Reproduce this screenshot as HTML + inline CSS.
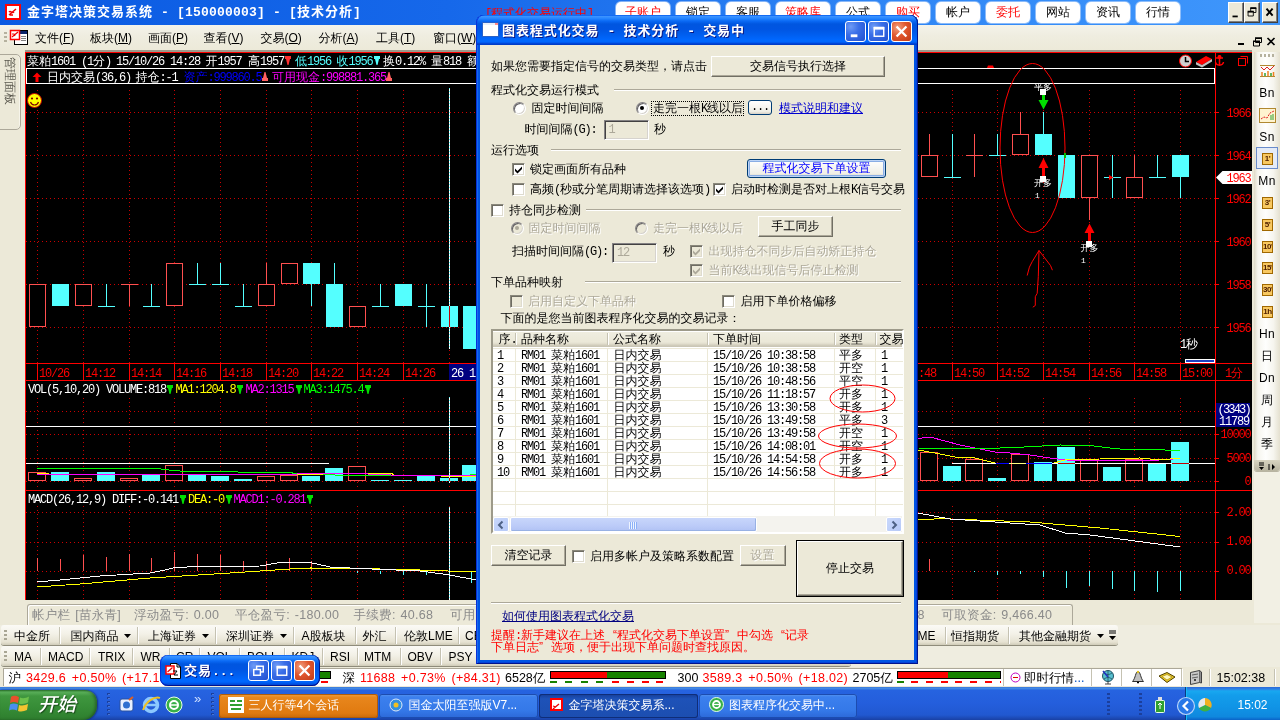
<!DOCTYPE html>
<html lang="zh-CN"><head><meta charset="utf-8"><title>金字塔决策交易系统</title>
<style>
html,body{margin:0;padding:0}
body{width:1280px;height:720px;overflow:hidden;position:relative;will-change:transform;background:#ece9d8;font-family:"Liberation Sans","WenQuanYi Zen Hei",sans-serif;font-size:12px;color:#000}
div,span{box-sizing:border-box}
.t{position:absolute;white-space:nowrap;font-size:12px}
.lb{font-family:"Liberation Mono","Noto Sans CJK SC",monospace;font-size:13px;letter-spacing:0.2px;font-weight:bold}
.l{font-family:"Liberation Mono","WenQuanYi Zen Hei",monospace;font-size:12px;letter-spacing:-1.2px}
.a{position:absolute}
.ql{display:inline-block;width:12px;text-align:right}
.qr{display:inline-block;width:12px;text-align:left}
.s{font-family:"Liberation Sans","WenQuanYi Zen Hei",sans-serif}
.s .l{font-family:"Liberation Sans","WenQuanYi Zen Hei",sans-serif;font-size:12px;letter-spacing:0}
.gray{color:#aca899;text-shadow:1px 1px 0 #fff}
.btn{position:absolute;background:#ece9d8;border:1px solid;border-color:#fff #716f64 #716f64 #fff;box-shadow:inset -1px -1px 0 #aca899;text-align:center;white-space:nowrap}
.xpbtn{position:absolute;border:1px solid #003c74;border-radius:3px;background:linear-gradient(#fff,#f0efe6 80%,#d6d0c5);text-align:center;white-space:nowrap}
.cb{position:absolute;width:13px;height:13px;border:1px solid;border-color:#8a887c #fff #fff #8a887c;background:#fff;box-shadow:inset 1px 1px 0 #6e6c62,inset -1px -1px 0 #dedbcf}
.cb.dis{background:#ece9d8}
.rb{position:absolute;width:13px;height:13px;border:1px solid;border-color:#848284 #fff #fff #848284;border-radius:50%;background:#fff;box-shadow:inset 1px 1px 0 #636163,inset -1px -1px 0 #d6d3ce}
.rb.dis{background:#ece9d8}
.gl{position:absolute;height:2px;border-top:1px solid #aca899;border-bottom:1px solid #fff}
.edit{position:absolute;border:1px solid;border-color:#848284 #fff #fff #848284;background:#ece9d8;box-shadow:inset 1px 1px 0 #424142,inset -1px -1px 0 #d6d3ce}
</style></head><body>
<div class="" style="position:absolute;left:0px;top:0px;width:1280px;height:25px;background:linear-gradient(90deg,#0a5ae2 0%,#1668ea 35%,#2f86f5 70%,#3f97fc 100%);"></div>
<div class="" style="position:absolute;left:5px;top:4px;width:16px;height:16px;background:#fff;border:2px solid #f00;"><svg width="12" height="12" viewBox="0 0 12 12" style="display:block"><path d="M2 9 L9 3 M2 6 C4 4,5 8,7 6 M3 9 L6 9" stroke="#e00" stroke-width="1.5" fill="none"/></svg></div>
<div class="t" style="left:27px;top:4px;height:16px;line-height:16px;font-size:13px;font-weight:bold;color:#fff;letter-spacing:1px;font-family:'Liberation Sans','Noto Sans CJK SC',sans-serif">金字塔决策交易系统<span class="lb"> - [150000003] - [</span>技术分析<span class="lb">]</span></div>
<div class="t " style="left:485px;top:4.5px;height:16px;line-height:16px;color:#f00;font-size:12px"><span class="l">[</span>程式化交易运行中<span class="l">]</span></div>
<div class="" style="position:absolute;left:616px;top:2px;width:54px;height:21px;background:#fff;border-radius:5px;text-align:center;line-height:20px;font-size:12px;color:#f00;white-space:nowrap;box-shadow:0 0 0 1px rgba(200,220,250,.6)">子账户</div>
<div class="" style="position:absolute;left:676px;top:2px;width:44px;height:21px;background:#fff;border-radius:5px;text-align:center;line-height:20px;font-size:12px;color:#000;white-space:nowrap;box-shadow:0 0 0 1px rgba(200,220,250,.6)">锁定</div>
<div class="" style="position:absolute;left:726px;top:2px;width:44px;height:21px;background:#fff;border-radius:5px;text-align:center;line-height:20px;font-size:12px;color:#000;white-space:nowrap;box-shadow:0 0 0 1px rgba(200,220,250,.6)">客服</div>
<div class="" style="position:absolute;left:776px;top:2px;width:54px;height:21px;background:#fff;border-radius:5px;text-align:center;line-height:20px;font-size:12px;color:#f00;white-space:nowrap;box-shadow:0 0 0 1px rgba(200,220,250,.6)">策略库</div>
<div class="" style="position:absolute;left:836px;top:2px;width:44px;height:21px;background:#fff;border-radius:5px;text-align:center;line-height:20px;font-size:12px;color:#000;white-space:nowrap;box-shadow:0 0 0 1px rgba(200,220,250,.6)">公式</div>
<div class="" style="position:absolute;left:886px;top:2px;width:44px;height:21px;background:#fff;border-radius:5px;text-align:center;line-height:20px;font-size:12px;color:#f00;white-space:nowrap;box-shadow:0 0 0 1px rgba(200,220,250,.6)">购买</div>
<div class="" style="position:absolute;left:936px;top:2px;width:44px;height:21px;background:#fff;border-radius:5px;text-align:center;line-height:20px;font-size:12px;color:#000;white-space:nowrap;box-shadow:0 0 0 1px rgba(200,220,250,.6)">帐户</div>
<div class="" style="position:absolute;left:986px;top:2px;width:44px;height:21px;background:#fff;border-radius:5px;text-align:center;line-height:20px;font-size:12px;color:#f00;white-space:nowrap;box-shadow:0 0 0 1px rgba(200,220,250,.6)">委托</div>
<div class="" style="position:absolute;left:1036px;top:2px;width:44px;height:21px;background:#fff;border-radius:5px;text-align:center;line-height:20px;font-size:12px;color:#000;white-space:nowrap;box-shadow:0 0 0 1px rgba(200,220,250,.6)">网站</div>
<div class="" style="position:absolute;left:1086px;top:2px;width:44px;height:21px;background:#fff;border-radius:5px;text-align:center;line-height:20px;font-size:12px;color:#000;white-space:nowrap;box-shadow:0 0 0 1px rgba(200,220,250,.6)">资讯</div>
<div class="" style="position:absolute;left:1136px;top:2px;width:44px;height:21px;background:#fff;border-radius:5px;text-align:center;line-height:20px;font-size:12px;color:#000;white-space:nowrap;box-shadow:0 0 0 1px rgba(200,220,250,.6)">行情</div>
<div class="" style="position:absolute;left:1228px;top:2px;width:16px;height:21px;background:#ece9d8;border:1px solid;border-color:#fff #404040 #404040 #fff;box-shadow:inset -1px -1px 0 #808080"><svg width="14" height="19" viewBox="0 0 16 19" style="display:block"><rect x="4" y="13" width="6" height="2" fill="#000"/></svg></div>
<div class="" style="position:absolute;left:1244px;top:2px;width:16px;height:21px;background:#ece9d8;border:1px solid;border-color:#fff #404040 #404040 #fff;box-shadow:inset -1px -1px 0 #808080"><svg width="14" height="19" viewBox="0 0 16 19" style="display:block"><path d="M6.500 4.500h6v5h-6z" fill="#ece9d8" stroke="#000"/><path d="M6 4.500h7" stroke="#000" stroke-width="2"/><path d="M3.500 8.500h6v5h-6z" fill="#ece9d8" stroke="#000"/><path d="M3 8.500h7" stroke="#000" stroke-width="2"/></svg></div>
<div class="" style="position:absolute;left:1262px;top:2px;width:16px;height:21px;background:#ece9d8;border:1px solid;border-color:#fff #404040 #404040 #fff;box-shadow:inset -1px -1px 0 #808080"><svg width="14" height="19" viewBox="0 0 16 19" style="display:block"><path d="M4 5 L11 13 M11 5 L4 13" stroke="#000" stroke-width="2.2"/></svg></div>
<div class="" style="position:absolute;left:0px;top:25px;width:1280px;height:27px;background:linear-gradient(180deg,#f4f3ea 0,#efede0 40%,#ece9d8 100%);"></div>
<div class="" style="position:absolute;left:4px;top:32px;width:3px;height:11px;background:repeating-linear-gradient(180deg,#b5b19e 0 2px,transparent 2px 4px);"></div>
<svg class="a" style="left:9px;top:28px" width="20" height="18" viewBox="0 0 20 18"><rect x="5.500" y="2.500" width="13" height="14" fill="#fff" stroke="#000"/><rect x="6" y="3" width="12" height="3" fill="#0a246a"/><path d="M12 8.500h5M12 10.500h5M12 12.500h5" stroke="#808080"/><rect x="1.500" y="2.500" width="9" height="9" fill="#fff" stroke="#f00" stroke-width="1.500"/><path d="M3 9 L9 4 M3 6 L5 6 L6 8" stroke="#e00" stroke-width="1.2" fill="none"/></svg>
<div class="t" style="left:35px;top:30px;height:16px;line-height:16px;font-size:12px">文件<span style="font-size:12px">(<u>F</u>)</span></div>
<div class="t" style="left:90px;top:30px;height:16px;line-height:16px;font-size:12px">板块<span style="font-size:12px">(<u>M</u>)</span></div>
<div class="t" style="left:148px;top:30px;height:16px;line-height:16px;font-size:12px">画面<span style="font-size:12px">(<u>P</u>)</span></div>
<div class="t" style="left:203.5px;top:30px;height:16px;line-height:16px;font-size:12px">查看<span style="font-size:12px">(<u>V</u>)</span></div>
<div class="t" style="left:260.5px;top:30px;height:16px;line-height:16px;font-size:12px">交易<span style="font-size:12px">(<u>O</u>)</span></div>
<div class="t" style="left:318.5px;top:30px;height:16px;line-height:16px;font-size:12px">分析<span style="font-size:12px">(<u>A</u>)</span></div>
<div class="t" style="left:376px;top:30px;height:16px;line-height:16px;font-size:12px">工具<span style="font-size:12px">(<u>T</u>)</span></div>
<div class="t" style="left:433px;top:30px;height:16px;line-height:16px;font-size:12px">窗口<span style="font-size:12px">(<u>W</u>)</span></div>
<svg class="a" style="left:1236px;top:35px" width="42" height="14" viewBox="0 0 42 14"><rect x="2" y="8" width="6" height="2" fill="#000"/><path d="M19.500 3.500h6v4h-6z M17.500 6.500h6v4.500h-6z" fill="#ece9d8" stroke="#000"/><path d="M19 3h7M17 6.200h7" stroke="#000" stroke-width="1.600"/><path d="M31.500 3 L38.500 10 M38.500 3 L31.500 10" stroke="#000" stroke-width="1.600"/></svg>
<div class="" style="position:absolute;left:0px;top:53px;width:25px;height:549px;background:#ece9d8;"></div>
<div class="" style="position:absolute;left:-2px;top:54px;width:23px;height:76px;border:1px solid #aca899;border-radius:0 5px 5px 0;background:#ece9d8;box-shadow:inset -1px 0 0 #f6f4ea"></div>
<div class="t" style="left:10px;top:80.500px;width:0;height:0;"><div style="position:absolute;left:-34px;top:-8px;width:68px;height:16px;line-height:16px;font-size:12px;color:#5a584e;transform:rotate(90deg);text-align:center">管理面板</div></div><svg class="a" style="left:0;top:0" width="1280" height="720" viewBox="0 0 1280 720">
<rect x="25" y="51" width="1227" height="549" fill="#000"/>
<rect x="25" y="50" width="1227" height="2" fill="#9d9a8c"/>
<path d="M37.5 90V363 M37.5 398V490 M37.5 506V600 M83.5 90V363 M83.5 398V490 M83.5 506V600 M129.5 90V363 M129.5 398V490 M129.5 506V600 M174.5 90V363 M174.5 398V490 M174.5 506V600 M220.5 90V363 M220.5 398V490 M220.5 506V600 M266.5 90V363 M266.5 398V490 M266.5 506V600 M311.5 90V363 M311.5 398V490 M311.5 506V600 M357.5 90V363 M357.5 398V490 M357.5 506V600 M403.5 90V363 M403.5 398V490 M403.5 506V600 M449.5 90V363 M449.5 398V490 M449.5 506V600 M494.5 90V363 M494.5 398V490 M494.5 506V600 M540.5 90V363 M540.5 398V490 M540.5 506V600 M586.5 90V363 M586.5 398V490 M586.5 506V600 M631.5 90V363 M631.5 398V490 M631.5 506V600 M677.5 90V363 M677.5 398V490 M677.5 506V600 M723.5 90V363 M723.5 398V490 M723.5 506V600 M769.5 90V363 M769.5 398V490 M769.5 506V600 M814.5 90V363 M814.5 398V490 M814.5 506V600 M860.5 90V363 M860.5 398V490 M860.5 506V600 M906.5 90V363 M906.5 398V490 M906.5 506V600 M952.5 90V363 M952.5 398V490 M952.5 506V600 M997.5 90V363 M997.5 398V490 M997.5 506V600 M1043.5 90V363 M1043.5 398V490 M1043.5 506V600 M1089.5 90V363 M1089.5 398V490 M1089.5 506V600 M1134.5 90V363 M1134.5 398V490 M1134.5 506V600 M1180.5 90V363 M1180.5 398V490 M1180.5 506V600 M26 112.5 H1215 M26 155.5 H1215 M26 198.5 H1215 M26 241.5 H1215 M26 284.5 H1215 M26 327.5 H1215 M26 411.5 H1215 M26 434.5 H1215 M26 458.5 H1215 M26 481.5 H1215 M26 512.5 H1215 M26 542.5 H1215 M26 571.5 H1215" stroke="#cc0000" stroke-width="1" stroke-dasharray="1 3" fill="none" shape-rendering="crispEdges"/>
<path d="M25 52.5H1252 M25.5 52V600 M25 363.500H1252 M25 380.500H1252 M25 490.500H1252 M1215.500 52V600 M37.5 363V381 M83.5 363V381 M129.5 363V381 M174.5 363V381 M220.5 363V381 M266.5 363V381 M311.5 363V381 M357.5 363V381 M403.5 363V381 M449.5 363V381 M494.5 363V381 M540.5 363V381 M586.5 363V381 M631.5 363V381 M677.5 363V381 M723.5 363V381 M769.5 363V381 M814.5 363V381 M860.5 363V381 M906.5 363V381 M952.5 363V381 M997.5 363V381 M1043.5 363V381 M1089.5 363V381 M1134.5 363V381 M1180.5 363V381 M1215 112.5 H1219 M1215 155.5 H1219 M1215 198.5 H1219 M1215 241.5 H1219 M1215 284.5 H1219 M1215 327.5 H1219 M1215 434.5 H1219 M1215 458.5 H1219 M1215 481.5 H1219 M1215 512.5 H1219 M1215 542.5 H1219 M1215 571.5 H1219" stroke="#f00" stroke-width="1" fill="none" shape-rendering="crispEdges"/>
<rect x="26.500" y="68.500" width="1188" height="15" fill="none" stroke="#fff" shape-rendering="crispEdges"/>
<path d="M52 284H69V306H52Z M303 263H320V284H303Z M326 284H343V327H326Z M395 284H412V306H395Z M441 306H458V327H441Z M463 306H480V349H463Z M1035 134H1052V155H1035Z M1058 155H1075V198H1058Z M1172 155H1189V177H1172Z" fill="#54ffff" shape-rendering="crispEdges"/>
<path d="M121 284.5H138 M129.5 284V306 M266.5 263V284 M929.5 134V155 M966 155.5H983 M974.5 134V177 M1020.5 112V134 M1089.5 198V220 M1134.5 155V177" stroke="#ff5050" fill="none" shape-rendering="crispEdges"/>
<path d="M29.5 284.5H45.5V326.5H29.5Z M75.5 284.5H91.5V305.5H75.5Z M166.5 263.5H182.5V305.5H166.5Z M258.5 284.5H274.5V305.5H258.5Z M281.5 263.5H297.5V283.5H281.5Z M349.5 306.5H365.5V326.5H349.5Z M921.5 155.5H937.5V176.5H921.5Z M1012.5 134.5H1028.5V154.5H1012.5Z M1081.5 155.5H1097.5V197.5H1081.5Z M1126.5 177.5H1142.5V197.5H1126.5Z" stroke="#ff5050" fill="#000" shape-rendering="crispEdges"/>
<path d="M98 306.5H115 M106.5 284V307 M143 306.5H160 M151.5 284V307 M189 284.5H206 M197.5 263V285 M212 284.5H229 M220.5 263V285 M235 306.5H252 M243.5 284V307 M311.5 284V306 M334.5 263V284 M372 306.5H389 M380.5 284V307 M418 306.5H435 M426.5 284V327 M944 177.5H961 M952.5 134V178 M989 155.5H1006 M997.5 134V156 M1043.5 112V134 M1104 177.5H1121 M1112.5 155V198 M1149 177.5H1166 M1157.5 155V178 M1180.5 177V198" stroke="#54ffff" fill="none" shape-rendering="crispEdges"/>
<path d="M51 472H69V481H51Z M97 472H115V481H97Z M142 475H160V481H142Z M188 475H206V481H188Z M211 476H229V481H211Z M234 479H252V481H234Z M302 476H320V481H302Z M325 468H343V481H325Z M371 480H389V481H371Z M394 480H412V481H394Z M417 476H435V481H417Z M440 478H458V481H440Z M462 465H480V481H462Z M943 466H961V481H943Z M988 478H1006V481H988Z M1034 462H1052V481H1034Z M1057 447H1075V481H1057Z M1103 467H1121V481H1103Z M1148 464H1166V481H1148Z M1171 442H1189V481H1171Z" fill="#54ffff" shape-rendering="crispEdges"/>
<path d="M28.5 472.5H45.5V480.5H28.5Z M74.5 478.5H91.5V480.5H74.5Z M120.5 478.5H137.5V480.5H120.5Z M165.5 465.5H182.5V480.5H165.5Z M257.5 476.5H274.5V480.5H257.5Z M280.5 475.5H297.5V480.5H280.5Z M348.5 466.5H365.5V480.5H348.5Z M920.5 452.5H937.5V480.5H920.5Z M965.5 459.5H982.5V480.5H965.5Z M1011.5 454.5H1028.5V480.5H1011.5Z M1080.5 460.5H1097.5V480.5H1080.5Z M1125.5 459.5H1142.5V480.5H1125.5Z" stroke="#ff5050" fill="#000" shape-rendering="crispEdges"/>
<polyline points="37,468.5 160,468.5 162,469.5 175,470.5 185,471.5 290,472.5 300,474.5 330,474.5 340,475.5 440,475.5 452,476.5 476,474.5" stroke="#00ff00" stroke-width="1" fill="none" shape-rendering="crispEdges"/>
<polyline points="37,473.5 60,474.5 150,474.5 300,474.5 347,473.5 392,473.5 394,475.5 438,475.5 445,476.5 476,476.5" stroke="#ffff00" stroke-width="1" fill="none" shape-rendering="crispEdges"/>
<polyline points="37,474.5 250,474.5 345,473.5 390,474.5 392,475.5 438,475.5 476,475.5" stroke="#ff00ff" stroke-width="1" fill="none" shape-rendering="crispEdges"/>
<polyline points="918,438.5 930,437 945,441 960,445 995,452 1010,453 1030,455 1050,458 1065,460 1130,460.5 1160,460 1180,458.5" stroke="#ff00ff" stroke-width="1" fill="none" shape-rendering="crispEdges"/>
<polyline points="918,448 945,448.5 960,448 1000,448 1015,447.5 1060,445 1090,445.5 1110,448 1130,450 1150,449 1165,450 1180,451" stroke="#00ff00" stroke-width="1" fill="none" shape-rendering="crispEdges"/>
<polyline points="918,450 935,453 955,457 975,458 995,463 1050,464 1065,460 1100,459 1140,458 1160,460 1180,458" stroke="#ffff00" stroke-width="1" fill="none" shape-rendering="crispEdges"/>
<path d="M26 426.500H1215 M26 463.500H329 M952 463.500H1215" stroke="#fff" fill="none" shape-rendering="crispEdges"/>
<path d="M996 463.500H1052" stroke="#0000ff" fill="none" shape-rendering="crispEdges"/>
<path d="M1009 463.500H1026" stroke="#ffff80" fill="none" shape-rendering="crispEdges"/>
<path d="M37.5 558V571 M60.5 559V571 M83.5 555V571 M106.5 557V571 M129.5 554V571 M151.5 558V571 M174.5 552V571 M197.5 554V571 M220.5 555V571 M243.5 561V571 M266.5 561V571 M289.5 558V571 M311.5 561V571 M929.5 559V571" stroke="#ff5050" fill="none" shape-rendering="crispEdges"/>
<path d="M357.5 571V573 M380.5 571V574 M403.5 571V575 M426.5 571V575 M449.5 571V576 M471.5 571V583 M974.5 571V572 M997.5 571V575 M1020.5 571V574 M1043.5 571V577 M1066.5 571V588 M1089.5 571V586 M1112.5 571V589 M1134.5 571V591 M1157.5 571V592 M1180.5 571V591" stroke="#54ffff" fill="none" shape-rendering="crispEdges"/>
<polyline points="37,587 80,584 150,578 230,573 290,569 310,568 360,568.5 420,570 476,572" stroke="#ffff00" stroke-width="1" fill="none" shape-rendering="crispEdges"/>
<polyline points="37,582 60,580 100,576 150,573 165,570 175,567.5 200,566.5 260,566 280,562.5 310,562.5 330,567 360,568.5 420,571 450,575 476,580" stroke="#ffffff" stroke-width="1" fill="none" shape-rendering="crispEdges"/>
<polyline points="918,520 940,518.6 1030,522 1100,528 1180,536.5" stroke="#ffff00" stroke-width="1" fill="none" shape-rendering="crispEdges"/>
<polyline points="918,513 950,519 1040,525 1065,533 1090,535 1180,547" stroke="#ffffff" stroke-width="1" fill="none" shape-rendering="crispEdges"/>
<path d="M1058 463.500H1075 M1172 463.500H1189" stroke="#c00000" fill="none" shape-rendering="crispEdges"/>
<path d="M449.500 88V349 M449.500 397V483 M449.500 507V600" stroke="#fff" fill="none" shape-rendering="crispEdges"/>
<path d="M449.500 88V349 M449.500 397V483 M449.500 507V600" stroke="#54ffff" stroke-dasharray="1 2" fill="none" shape-rendering="crispEdges"/>
<path d="M449.500 306V327 M449.500 478V481" stroke="#c00000" fill="none" shape-rendering="crispEdges"/>
<ellipse cx="1032.500" cy="148" rx="32.500" ry="84.500" stroke="#f00" fill="none"/>
<path d="M1039 250.500 L1038.300 276.700 L1037.200 293.300 L1035.300 296.700 L1035.300 305.500 L1032.800 307.200 M1039 250.500 L1032.200 261.700 L1029.400 267.200 L1027.200 275.500 M1039 250.500 L1050.500 265.500 L1052.400 270.200" stroke="#f00" fill="none"/>
<rect x="1040" y="89" width="6" height="6" fill="#fff"/>
<path d="M1042 95H1045V100H1048.500L1043.500 109.500L1038.500 100H1042Z" fill="#00e000"/>
<path d="M1043.500 158 L1048.500 168 H1045 V176 H1042 V168 H1038.500Z" fill="#f00"/>
<rect x="1040" y="176" width="6" height="6" fill="#fff"/>
<path d="M1089.500 223.500 L1094.500 233 H1091 V241 H1088 V233 H1084.500Z" fill="#f00"/>
<rect x="1086" y="241" width="6" height="6" fill="#fff"/>
<path d="M1109 175 L1113.500 177.500 L1109 180Z" fill="#f00"/>
<rect x="1064" y="153" width="2" height="5" fill="#00c000"/>
<rect x="1185.500" y="359.500" width="29" height="3" fill="#2040c0" stroke="#fff" shape-rendering="crispEdges"/>
<path d="M1216 177.500 L1222.500 171 H1252 V184 H1222.500Z" fill="#fff"/>
<rect x="1216" y="403" width="34" height="24" fill="#000080"/>
<rect x="449" y="364" width="27" height="16" fill="#000080"/>
<circle cx="34.500" cy="100.500" r="7" fill="#ffff00" stroke="#c80000" stroke-width="1"/><circle cx="32" cy="98.500" r="1.100" fill="#800000"/><circle cx="37" cy="98.500" r="1.100" fill="#800000"/><path d="M30.500 102 C32 106,37 106,38.500 102" stroke="#800000" fill="none" stroke-width="1.200"/>
<path d="M37 72.500 L41.500 77 H38.500 V82 H35.500 V77 H32.500Z" fill="#f00"/>
<circle cx="1185.500" cy="61" r="6" fill="#d0d0d0" stroke="#f00"/><path d="M1185.500 57V61.500H1189" stroke="#000" fill="none" stroke-width="1.500"/>
<path d="M1196 62 L1206 56 L1212 59 L1202 65Z" fill="#f00"/><path d="M1196 62V64.500L1202 67.500V65Z M1202 65 L1212 59V61.500L1202 67.500Z" fill="#c0c0c0"/>
<path d="M1219.500 55V66 M1216 58H1223 M1215.500 62 C1216 66,1223 66,1223.500 62" stroke="#f00" stroke-width="1.500" fill="none"/><circle cx="1219.500" cy="57" r="2" fill="#f00"/>
<path d="M1240.500 56.500H1247.500V63.500" stroke="#f00" fill="none"/><rect x="1238.500" y="58.500" width="7" height="7" fill="none" stroke="#f00"/>
<path d="M987 68 L994 68 L993 65.500 L988 65.500Z" fill="#f00"/>
</svg>
<div class="t " style="left:27px;top:53.5px;height:14px;line-height:14px;color:#fff">菜粕<span class="l">1601</span></div>
<div class="t " style="left:81px;top:53.5px;height:14px;line-height:14px;color:#fff"><span class="l">(1</span>分<span class="l">)</span></div>
<div class="t " style="left:116px;top:53.5px;height:14px;line-height:14px;color:#fff"><span class="l">15/10/26</span></div>
<div class="t " style="left:170px;top:53.5px;height:14px;line-height:14px;color:#fff"><span class="l">14:28</span></div>
<div class="t " style="left:205.5px;top:53.5px;height:14px;line-height:14px;color:#fff">开<span class="l">1957</span></div>
<div class="t " style="left:248px;top:53.5px;height:14px;line-height:14px;color:#fff">高<span class="l">1957</span></div>
<div class="t " style="left:295px;top:53.5px;height:14px;line-height:14px;color:#54ffff">低<span class="l">1956</span></div>
<div class="t " style="left:336.5px;top:53.5px;height:14px;line-height:14px;color:#54ffff">收<span class="l">1956</span></div>
<div class="t " style="left:383px;top:53.5px;height:14px;line-height:14px;color:#fff">换<span class="l">0.12%</span></div>
<div class="t " style="left:431px;top:53.5px;height:14px;line-height:14px;color:#fff">量<span class="l">818</span></div>
<div class="t " style="left:467px;top:53.5px;height:14px;line-height:14px;color:#fff">额</div>
<svg class="a" style="left:285px;top:56px" width="6" height="9" viewBox="0 0 6 9"><path d="M0 0H6V3H5L3.500 9H2.500L1 3H0Z" fill="#ff3030"/></svg>
<svg class="a" style="left:374px;top:56px" width="6" height="9" viewBox="0 0 6 9"><path d="M0 0H6V3H5L3.500 9H2.500L1 3H0Z" fill="#54ffff"/></svg>
<div class="t " style="left:47px;top:69.5px;height:14px;line-height:14px;color:#fff">日内交易<span class="l">(36,6)</span></div>
<div class="t " style="left:135.5px;top:69.5px;height:14px;line-height:14px;color:#fff">持仓<span class="l">:-1</span></div>
<div class="t " style="left:183.5px;top:69.5px;height:14px;line-height:14px;color:#0000ff">资产<span class="l">:999860.5</span></div>
<div class="t " style="left:272px;top:69.5px;height:14px;line-height:14px;color:#ff00ff">可用现金<span class="l">:998881.365</span></div>
<svg class="a" style="left:262px;top:72px" width="6" height="9" viewBox="0 0 6 9"><path d="M2.500 0H3.500L5 6H6V9H0V6H1Z" fill="#ff6060"/></svg>
<svg class="a" style="left:386px;top:72px" width="6" height="9" viewBox="0 0 6 9"><path d="M2.500 0H3.500L5 6H6V9H0V6H1Z" fill="#ff6060"/></svg>
<div class="t " style="left:1226.5px;top:105.5px;height:14px;line-height:14px;color:#f00"><span class="l">1966</span></div>
<div class="t " style="left:1226.5px;top:148.5px;height:14px;line-height:14px;color:#f00"><span class="l">1964</span></div>
<div class="t " style="left:1226.5px;top:191.5px;height:14px;line-height:14px;color:#f00"><span class="l">1962</span></div>
<div class="t " style="left:1226.5px;top:234.5px;height:14px;line-height:14px;color:#f00"><span class="l">1960</span></div>
<div class="t " style="left:1226.5px;top:277.5px;height:14px;line-height:14px;color:#f00"><span class="l">1958</span></div>
<div class="t " style="left:1226.5px;top:320.5px;height:14px;line-height:14px;color:#f00"><span class="l">1956</span></div>
<div class="t " style="left:1226.5px;top:170.5px;height:14px;line-height:14px;color:#f00"><span class="l">1963</span></div>
<div class="t " style="left:1220.5px;top:426.5px;height:14px;line-height:14px;color:#f00"><span class="l">10000</span></div>
<div class="t " style="left:1226.5px;top:450.5px;height:14px;line-height:14px;color:#f00"><span class="l">5000</span></div>
<div class="t " style="left:1244.5px;top:473.5px;height:14px;line-height:14px;color:#f00"><span class="l">0</span></div>
<div class="t " style="left:1226.5px;top:504.5px;height:14px;line-height:14px;color:#f00"><span class="l">2.00</span></div>
<div class="t " style="left:1226.5px;top:533.5px;height:14px;line-height:14px;color:#f00"><span class="l">1.00</span></div>
<div class="t " style="left:1226.5px;top:562.5px;height:14px;line-height:14px;color:#f00"><span class="l">0.00</span></div>
<div class="t " style="left:1217.5px;top:401.5px;height:14px;line-height:14px;color:#fff"><span class="l" style="letter-spacing:-1.800px">(3343)</span></div>
<div class="t " style="left:1219px;top:413.5px;height:14px;line-height:14px;color:#fff"><span class="l">11789</span></div>
<div class="t " style="left:39px;top:365.5px;height:14px;line-height:14px;color:#f00"><span class="l">10/26</span></div>
<div class="t " style="left:85px;top:365.5px;height:14px;line-height:14px;color:#f00"><span class="l">14:12</span></div>
<div class="t " style="left:131px;top:365.5px;height:14px;line-height:14px;color:#f00"><span class="l">14:14</span></div>
<div class="t " style="left:176px;top:365.5px;height:14px;line-height:14px;color:#f00"><span class="l">14:16</span></div>
<div class="t " style="left:222px;top:365.5px;height:14px;line-height:14px;color:#f00"><span class="l">14:18</span></div>
<div class="t " style="left:268px;top:365.5px;height:14px;line-height:14px;color:#f00"><span class="l">14:20</span></div>
<div class="t " style="left:313px;top:365.5px;height:14px;line-height:14px;color:#f00"><span class="l">14:22</span></div>
<div class="t " style="left:359px;top:365.5px;height:14px;line-height:14px;color:#f00"><span class="l">14:24</span></div>
<div class="t " style="left:405px;top:365.5px;height:14px;line-height:14px;color:#f00"><span class="l">14:26</span></div>
<div class="t " style="left:451px;top:365.5px;height:14px;line-height:14px;color:#fff"><span class="l">26 1</span></div>
<div class="t " style="left:954px;top:365.5px;height:14px;line-height:14px;color:#f00"><span class="l">14:50</span></div>
<div class="t " style="left:999px;top:365.5px;height:14px;line-height:14px;color:#f00"><span class="l">14:52</span></div>
<div class="t " style="left:1045px;top:365.5px;height:14px;line-height:14px;color:#f00"><span class="l">14:54</span></div>
<div class="t " style="left:1091px;top:365.5px;height:14px;line-height:14px;color:#f00"><span class="l">14:56</span></div>
<div class="t " style="left:1136px;top:365.5px;height:14px;line-height:14px;color:#f00"><span class="l">14:58</span></div>
<div class="t " style="left:1182px;top:365.5px;height:14px;line-height:14px;color:#f00"><span class="l">15:00</span></div>
<div class="t " style="left:918px;top:365.5px;height:14px;line-height:14px;color:#f00"><span class="l">:48</span></div>
<div class="t " style="left:1225px;top:365.5px;height:14px;line-height:14px;color:#f00"><span class="l">1</span>分</div>
<div class="t " style="left:1180px;top:337px;height:14px;line-height:14px;color:#fff"><span class="l">1</span>秒</div>
<div class="t " style="left:28px;top:382px;height:14px;line-height:14px;color:#fff"><span class="l">VOL(5,10,20)</span></div>
<div class="t " style="left:106px;top:382px;height:14px;line-height:14px;color:#fff"><span class="l">VOLUME:818</span></div>
<svg class="a" style="left:167px;top:384.5px" width="6" height="9" viewBox="0 0 6 9"><path d="M0 0H6V3H5L3.500 9H2.500L1 3H0Z" fill="#00e000"/></svg>
<div class="t " style="left:175.5px;top:382px;height:14px;line-height:14px;color:#ffff00"><span class="l">MA1:1204.8</span></div>
<svg class="a" style="left:237px;top:384.5px" width="6" height="9" viewBox="0 0 6 9"><path d="M0 0H6V3H5L3.500 9H2.500L1 3H0Z" fill="#00e000"/></svg>
<div class="t " style="left:245.5px;top:382px;height:14px;line-height:14px;color:#ff00ff"><span class="l">MA2:1315</span></div>
<svg class="a" style="left:295.5px;top:384.5px" width="6" height="9" viewBox="0 0 6 9"><path d="M0 0H6V3H5L3.500 9H2.500L1 3H0Z" fill="#00e000"/></svg>
<div class="t " style="left:303.5px;top:382px;height:14px;line-height:14px;color:#00ff00"><span class="l">MA3:1475.4</span></div>
<svg class="a" style="left:365px;top:384.5px" width="6" height="9" viewBox="0 0 6 9"><path d="M0 0H6V3H5L3.500 9H2.500L1 3H0Z" fill="#00e000"/></svg>
<div class="t " style="left:28px;top:492px;height:14px;line-height:14px;color:#fff"><span class="l">MACD(26,12,9)</span></div>
<div class="t " style="left:112px;top:492px;height:14px;line-height:14px;color:#fff"><span class="l">DIFF:-0.141</span></div>
<svg class="a" style="left:179.5px;top:494.5px" width="6" height="9" viewBox="0 0 6 9"><path d="M0 0H6V3H5L3.500 9H2.500L1 3H0Z" fill="#00e000"/></svg>
<div class="t " style="left:188px;top:492px;height:14px;line-height:14px;color:#ffff00"><span class="l">DEA:-0</span></div>
<svg class="a" style="left:225.5px;top:494.5px" width="6" height="9" viewBox="0 0 6 9"><path d="M0 0H6V3H5L3.500 9H2.500L1 3H0Z" fill="#00e000"/></svg>
<div class="t " style="left:233.5px;top:492px;height:14px;line-height:14px;color:#ff00ff"><span class="l">MACD1:-0.281</span></div>
<svg class="a" style="left:306.5px;top:494.5px" width="6" height="9" viewBox="0 0 6 9"><path d="M0 0H6V3H5L3.500 9H2.500L1 3H0Z" fill="#00e000"/></svg>
<div class="t " style="left:1034px;top:80px;height:14px;line-height:14px;color:#fff;font-size:9px">平多</div>
<div class="t " style="left:1034px;top:176px;height:14px;line-height:14px;color:#fff;font-size:9px">开多</div>
<div class="t " style="left:1035px;top:186.5px;height:14px;line-height:14px;color:#fff"><span style="font-family:Liberation Mono,monospace;font-size:8px">1</span></div>
<div class="t " style="left:1080.5px;top:241px;height:14px;line-height:14px;color:#fff;font-size:9px">开多</div>
<div class="t " style="left:1081px;top:251.5px;height:14px;line-height:14px;color:#fff"><span style="font-family:Liberation Mono,monospace;font-size:8px">1</span></div><div class="" style="position:absolute;left:1252px;top:52px;width:28px;height:552px;background:#ece9d8;"></div>
<div class="" style="position:absolute;left:1254px;top:52px;width:26px;height:571px;background:#f2f0e4;"></div>
<div class="" style="position:absolute;left:1254px;top:52px;width:26px;height:419px;background:linear-gradient(90deg,#dedac8 0,#f6f5ee 15%,#fefefd 45%,#f6f5ee 75%,#e4e0cf 100%);border-radius:0 0 3px 3px;box-shadow:0 1px 0 #b8b4a2"></div>
<div class="" style="position:absolute;left:1260px;top:54px;width:14px;height:3px;background:repeating-linear-gradient(90deg,#b5b19e 0 2px,transparent 2px 4px);"></div>
<svg class="a" style="left:1259px;top:63.8px" width="17" height="14" viewBox="0 0 17 14"><path d="M1 1.500H16M1 12.500H16" stroke="#b08830" stroke-width="1"/><path d="M2 3L5 6L8 3L11 6L15 2" stroke="#e02020" fill="none"/><path d="M3 8V12M9 7V12M14.500 8V12" stroke="#f08020" stroke-width="1.500"/><path d="M6 9V12M12 9V12" stroke="#30a030" stroke-width="1.500"/></svg>
<div class="t" style="left:1255px;width:24px;text-align:center;top:85.2px;height:16px;line-height:16px;font-size:12px;font-family:'Liberation Sans','WenQuanYi Zen Hei',sans-serif;letter-spacing:0.400px">Bn</div>
<svg class="a" style="left:1259px;top:107.6px" width="17" height="15" viewBox="0 0 17 15"><rect x="0.500" y="0.500" width="16" height="14" fill="#fff4d0" stroke="#b08830"/><path d="M2 11L5 9L8 10L11 5L15 3" stroke="#e02020" fill="none" stroke-dasharray="2 1"/><path d="M12 7V12M14 6V12" stroke="#30a030"/></svg>
<div class="t" style="left:1255px;width:24px;text-align:center;top:129px;height:16px;line-height:16px;font-size:12px;font-family:'Liberation Sans','WenQuanYi Zen Hei',sans-serif;letter-spacing:0.400px">Sn</div>
<div class="" style="position:absolute;left:1256px;top:147.4px;width:22px;height:22px;border:1px solid #6a8ccb;background:#e4ebf6;"></div>
<div class="" style="position:absolute;left:1262px;top:152.9px;width:11px;height:12px;background:#f8c860;border:1px solid #a06800;text-align:center;font-family:'Liberation Sans',sans-serif;font-size:8px;font-weight:bold;line-height:9px;color:#502000;letter-spacing:-0.500px;white-space:nowrap;overflow:hidden">1'</div>
<div class="t" style="left:1255px;width:24px;text-align:center;top:172.8px;height:16px;line-height:16px;font-size:12px;font-family:'Liberation Sans','WenQuanYi Zen Hei',sans-serif;letter-spacing:0.400px">Mn</div>
<div class="" style="position:absolute;left:1262px;top:196.7px;width:11px;height:12px;background:#f8c860;border:1px solid #a06800;text-align:center;font-family:'Liberation Sans',sans-serif;font-size:8px;font-weight:bold;line-height:9px;color:#502000;letter-spacing:-0.500px;white-space:nowrap;overflow:hidden">3'</div>
<div class="" style="position:absolute;left:1262px;top:218.6px;width:11px;height:12px;background:#f8c860;border:1px solid #a06800;text-align:center;font-family:'Liberation Sans',sans-serif;font-size:8px;font-weight:bold;line-height:9px;color:#502000;letter-spacing:-0.500px;white-space:nowrap;overflow:hidden">5'</div>
<div class="" style="position:absolute;left:1262px;top:240.5px;width:11px;height:12px;background:#f8c860;border:1px solid #a06800;text-align:center;font-family:'Liberation Sans',sans-serif;font-size:8px;font-weight:bold;line-height:9px;color:#502000;letter-spacing:-0.500px;white-space:nowrap;overflow:hidden">10'</div>
<div class="" style="position:absolute;left:1262px;top:262.4px;width:11px;height:12px;background:#f8c860;border:1px solid #a06800;text-align:center;font-family:'Liberation Sans',sans-serif;font-size:8px;font-weight:bold;line-height:9px;color:#502000;letter-spacing:-0.500px;white-space:nowrap;overflow:hidden">15'</div>
<div class="" style="position:absolute;left:1262px;top:284.3px;width:11px;height:12px;background:#f8c860;border:1px solid #a06800;text-align:center;font-family:'Liberation Sans',sans-serif;font-size:8px;font-weight:bold;line-height:9px;color:#502000;letter-spacing:-0.500px;white-space:nowrap;overflow:hidden">30'</div>
<div class="" style="position:absolute;left:1262px;top:306.2px;width:11px;height:12px;background:#f8c860;border:1px solid #a06800;text-align:center;font-family:'Liberation Sans',sans-serif;font-size:8px;font-weight:bold;line-height:9px;color:#502000;letter-spacing:-0.500px;white-space:nowrap;overflow:hidden">1h</div>
<div class="t" style="left:1255px;width:24px;text-align:center;top:326.1px;height:16px;line-height:16px;font-size:12px;font-family:'Liberation Sans','WenQuanYi Zen Hei',sans-serif;letter-spacing:0.400px">Hn</div>
<div class="t" style="left:1255px;width:24px;text-align:center;top:348px;height:16px;line-height:16px;font-size:12px;">日</div>
<div class="t" style="left:1255px;width:24px;text-align:center;top:369.9px;height:16px;line-height:16px;font-size:12px;font-family:'Liberation Sans','WenQuanYi Zen Hei',sans-serif;letter-spacing:0.400px">Dn</div>
<div class="t" style="left:1255px;width:24px;text-align:center;top:391.8px;height:16px;line-height:16px;font-size:12px;">周</div>
<div class="t" style="left:1255px;width:24px;text-align:center;top:413.7px;height:16px;line-height:16px;font-size:12px;">月</div>
<div class="t" style="left:1255px;width:24px;text-align:center;top:435.6px;height:16px;line-height:16px;font-size:12px;">季</div>
<div class="" style="position:absolute;left:1254px;top:460px;width:26px;height:11px;background:linear-gradient(180deg,#d8d4c0,#b8b4a0);border-radius:0 0 3px 3px;"></div>
<svg class="a" style="left:1258px;top:462px" width="20" height="9"><path d="M1 1H6M1 3H6" stroke="#000"/><path d="M1 5H6L3.500 8Z" fill="#000"/><path d="M11 2V8" stroke="#000"/><path d="M14 2L17 5L14 8Z" fill="#000"/></svg><div class="" style="position:absolute;left:27px;top:604px;width:1046px;height:21px;border:1px solid #aca899;border-radius:3px 3px 0 0;border-bottom:none;background:#ece9d8;box-shadow:inset 1px 1px 0 #fff"></div>
<div class="t s" style="left:32px;top:607px;height:16px;line-height:16px;color:#8a8a8a;font-size:12.500px;letter-spacing:0.300px;word-spacing:1px">帐户栏 [苗永青]</div>
<div class="t s" style="left:134px;top:607px;height:16px;line-height:16px;color:#8a8a8a;font-size:12.500px;letter-spacing:0.300px;word-spacing:1px">浮动盈亏: 0.00</div>
<div class="t s" style="left:235px;top:607px;height:16px;line-height:16px;color:#8a8a8a;font-size:12.500px;letter-spacing:0.300px;word-spacing:1px">平仓盈亏: -180.00</div>
<div class="t s" style="left:353.5px;top:607px;height:16px;line-height:16px;color:#8a8a8a;font-size:12.500px;letter-spacing:0.300px;word-spacing:1px">手续费: 40.68</div>
<div class="t s" style="left:450px;top:607px;height:16px;line-height:16px;color:#8a8a8a;font-size:12.500px;letter-spacing:0.300px;word-spacing:1px">可用资金: 990,533.60</div>
<div class="t s" style="left:941.5px;top:607px;height:16px;line-height:16px;color:#8a8a8a;font-size:12.500px;letter-spacing:0.300px;word-spacing:1px">可取资金: 9,466.40</div>
<div class="t s" style="left:917.5px;top:607px;height:16px;line-height:16px;color:#8a8a8a;font-size:12.500px;letter-spacing:0.300px;word-spacing:1px">8</div>
<div class="" style="position:absolute;left:0px;top:625px;width:1280px;height:42px;background:#efede0;"></div>
<div class="" style="position:absolute;left:1px;top:625px;width:1117px;height:20px;background:linear-gradient(180deg,#fbfaf6 0,#f3f1e7 45%,#e6e2d2 85%,#cfcbb8 100%);border-radius:3px;box-shadow:0 1px 0 #8f8c7b"></div>
<div class="" style="position:absolute;left:4px;top:630px;width:3px;height:10px;background:repeating-linear-gradient(180deg,#a9a694 0 2px,transparent 2px 4px);"></div>
<div class="t s" style="left:14px;top:627.5px;height:16px;line-height:16px;font-size:12px">中金所</div>
<div class="t s" style="left:70.5px;top:627.5px;height:16px;line-height:16px;font-size:12px">国内商品</div>
<svg class="a" style="left:124px;top:634px" width="7" height="4"><path d="M0 0H7L3.500 4Z" fill="#000"/></svg>
<div class="t s" style="left:148px;top:627.5px;height:16px;line-height:16px;font-size:12px">上海证券</div>
<svg class="a" style="left:202px;top:634px" width="7" height="4"><path d="M0 0H7L3.500 4Z" fill="#000"/></svg>
<div class="t s" style="left:226px;top:627.5px;height:16px;line-height:16px;font-size:12px">深圳证券</div>
<svg class="a" style="left:280px;top:634px" width="7" height="4"><path d="M0 0H7L3.500 4Z" fill="#000"/></svg>
<div class="t s" style="left:301.5px;top:627.5px;height:16px;line-height:16px;font-size:12px">A股板块</div>
<div class="t s" style="left:362.5px;top:627.5px;height:16px;line-height:16px;font-size:12px">外汇</div>
<div class="t s" style="left:404px;top:627.5px;height:16px;line-height:16px;font-size:12px">伦敦LME</div>
<div class="t s" style="left:465px;top:627.5px;height:16px;line-height:16px;font-size:12px">CBOT</div>
<div class="t s" style="left:908.8px;top:627.5px;height:16px;line-height:16px;font-size:12px">CME</div>
<div class="t s" style="left:951px;top:627.5px;height:16px;line-height:16px;font-size:12px">恒指期货</div>
<div class="t s" style="left:1019px;top:627.5px;height:16px;line-height:16px;font-size:12px">其他金融期货</div>
<svg class="a" style="left:1097px;top:634px" width="7" height="4"><path d="M0 0H7L3.500 4Z" fill="#000"/></svg>
<div class="" style="position:absolute;left:59px;top:627px;width:2px;height:17px;border-left:1px solid #c5c2b2;border-right:1px solid #fff;"></div>
<div class="" style="position:absolute;left:137px;top:627px;width:2px;height:17px;border-left:1px solid #c5c2b2;border-right:1px solid #fff;"></div>
<div class="" style="position:absolute;left:215px;top:627px;width:2px;height:17px;border-left:1px solid #c5c2b2;border-right:1px solid #fff;"></div>
<div class="" style="position:absolute;left:293px;top:627px;width:2px;height:17px;border-left:1px solid #c5c2b2;border-right:1px solid #fff;"></div>
<div class="" style="position:absolute;left:355px;top:627px;width:2px;height:17px;border-left:1px solid #c5c2b2;border-right:1px solid #fff;"></div>
<div class="" style="position:absolute;left:395px;top:627px;width:2px;height:17px;border-left:1px solid #c5c2b2;border-right:1px solid #fff;"></div>
<div class="" style="position:absolute;left:458px;top:627px;width:2px;height:17px;border-left:1px solid #c5c2b2;border-right:1px solid #fff;"></div>
<div class="" style="position:absolute;left:945px;top:627px;width:2px;height:17px;border-left:1px solid #c5c2b2;border-right:1px solid #fff;"></div>
<div class="" style="position:absolute;left:1008px;top:627px;width:2px;height:17px;border-left:1px solid #c5c2b2;border-right:1px solid #fff;"></div>
<svg class="a" style="left:1109px;top:630px" width="8" height="11"><path d="M0 1H7M0 3H7" stroke="#000"/><path d="M0 6H7L3.500 10Z" fill="#000"/></svg>
<div class="" style="position:absolute;left:1px;top:646px;width:850px;height:20px;background:linear-gradient(180deg,#fbfaf6 0,#f3f1e7 45%,#e6e2d2 85%,#cfcbb8 100%);border-radius:3px;box-shadow:0 1px 0 #8f8c7b"></div>
<div class="" style="position:absolute;left:4px;top:651px;width:3px;height:10px;background:repeating-linear-gradient(180deg,#a9a694 0 2px,transparent 2px 4px);"></div>
<div class="t s" style="left:14px;top:649px;height:16px;line-height:16px;font-size:12px">MA</div>
<div class="t s" style="left:48px;top:649px;height:16px;line-height:16px;font-size:12px">MACD</div>
<div class="t s" style="left:98px;top:649px;height:16px;line-height:16px;font-size:12px">TRIX</div>
<div class="t s" style="left:140.5px;top:649px;height:16px;line-height:16px;font-size:12px">WR</div>
<div class="t s" style="left:176px;top:649px;height:16px;line-height:16px;font-size:12px">CR</div>
<div class="t s" style="left:207.5px;top:649px;height:16px;line-height:16px;font-size:12px">VOL</div>
<div class="t s" style="left:247px;top:649px;height:16px;line-height:16px;font-size:12px">BOLL</div>
<div class="t s" style="left:291.5px;top:649px;height:16px;line-height:16px;font-size:12px">KDJ</div>
<div class="t s" style="left:330px;top:649px;height:16px;line-height:16px;font-size:12px">RSI</div>
<div class="t s" style="left:364px;top:649px;height:16px;line-height:16px;font-size:12px">MTM</div>
<div class="t s" style="left:407.5px;top:649px;height:16px;line-height:16px;font-size:12px">OBV</div>
<div class="t s" style="left:448.5px;top:649px;height:16px;line-height:16px;font-size:12px">PSY</div>
<div class="" style="position:absolute;left:40px;top:648px;width:2px;height:17px;border-left:1px solid #c5c2b2;border-right:1px solid #fff;"></div>
<div class="" style="position:absolute;left:89px;top:648px;width:2px;height:17px;border-left:1px solid #c5c2b2;border-right:1px solid #fff;"></div>
<div class="" style="position:absolute;left:132px;top:648px;width:2px;height:17px;border-left:1px solid #c5c2b2;border-right:1px solid #fff;"></div>
<div class="" style="position:absolute;left:169px;top:648px;width:2px;height:17px;border-left:1px solid #c5c2b2;border-right:1px solid #fff;"></div>
<div class="" style="position:absolute;left:199px;top:648px;width:2px;height:17px;border-left:1px solid #c5c2b2;border-right:1px solid #fff;"></div>
<div class="" style="position:absolute;left:239px;top:648px;width:2px;height:17px;border-left:1px solid #c5c2b2;border-right:1px solid #fff;"></div>
<div class="" style="position:absolute;left:284px;top:648px;width:2px;height:17px;border-left:1px solid #c5c2b2;border-right:1px solid #fff;"></div>
<div class="" style="position:absolute;left:322px;top:648px;width:2px;height:17px;border-left:1px solid #c5c2b2;border-right:1px solid #fff;"></div>
<div class="" style="position:absolute;left:357px;top:648px;width:2px;height:17px;border-left:1px solid #c5c2b2;border-right:1px solid #fff;"></div>
<div class="" style="position:absolute;left:400px;top:648px;width:2px;height:17px;border-left:1px solid #c5c2b2;border-right:1px solid #fff;"></div>
<div class="" style="position:absolute;left:440px;top:648px;width:2px;height:17px;border-left:1px solid #c5c2b2;border-right:1px solid #fff;"></div>
<div class="" style="position:absolute;left:0px;top:667px;width:1280px;height:20px;background:#ece9d8;"></div>
<div class="" style="position:absolute;left:3px;top:668px;width:1000px;height:18px;background:#fff;border-top:1px solid #aca899;border-left:1px solid #aca899"></div>
<div class="t s" style="left:8.5px;top:670px;height:16px;line-height:16px;color:#000;font-size:12.500px">沪</div>
<div class="t s" style="left:26px;top:670px;height:16px;line-height:16px;color:#f00;font-size:12.500px;word-spacing:2px;letter-spacing:0.300px">3429.6 +0.50% (+17.15) 3823亿</div>
<div class="t s" style="left:342.5px;top:670px;height:16px;line-height:16px;color:#000;font-size:12.500px">深</div>
<div class="t s" style="left:360px;top:670px;height:16px;line-height:16px;color:#f00;font-size:12.500px;word-spacing:2px;letter-spacing:0.300px">11688 +0.73% (+84.31)</div>
<div class="t s" style="left:505px;top:670px;height:16px;line-height:16px;color:#000;font-size:12.500px">6528亿</div>
<div class="t s" style="left:677.5px;top:670px;height:16px;line-height:16px;color:#000;font-size:12.500px">300</div>
<div class="t s" style="left:702.5px;top:670px;height:16px;line-height:16px;color:#f00;font-size:12.500px;word-spacing:2px;letter-spacing:0.300px">3589.3 +0.50% (+18.02)</div>
<div class="t s" style="left:852.5px;top:670px;height:16px;line-height:16px;color:#000;font-size:12.500px">2705亿</div>
<div class="" style="position:absolute;left:215px;top:671px;width:116px;height:8px;background:linear-gradient(90deg,#fb0000 0 56px,#178200 56px);border:1px solid #000;"></div>
<div class="" style="position:absolute;left:215px;top:681px;width:60px;height:2px;background:repeating-linear-gradient(90deg,#178200 0 7px,transparent 7px 15.400px);"></div>
<div class="" style="position:absolute;left:276.5px;top:681px;width:54.5px;height:2px;background:repeating-linear-gradient(90deg,#fb0000 0 7px,transparent 7px 14.800px);"></div>
<div class="" style="position:absolute;left:550px;top:671px;width:116px;height:8px;background:linear-gradient(90deg,#fb0000 0 56.5px,#178200 56.5px);border:1px solid #000;"></div>
<div class="" style="position:absolute;left:550px;top:681px;width:60.5px;height:2px;background:repeating-linear-gradient(90deg,#178200 0 7px,transparent 7px 15.400px);"></div>
<div class="" style="position:absolute;left:612px;top:681px;width:54px;height:2px;background:repeating-linear-gradient(90deg,#fb0000 0 7px,transparent 7px 14.800px);"></div>
<div class="" style="position:absolute;left:896.5px;top:671px;width:104.5px;height:8px;background:linear-gradient(90deg,#fb0000 0 50.5px,#178200 50.5px);border:1px solid #000;"></div>
<div class="" style="position:absolute;left:896.5px;top:681px;width:12.5px;height:2px;background:repeating-linear-gradient(90deg,#178200 0 7px,transparent 7px 15.400px);"></div>
<div class="" style="position:absolute;left:910.5px;top:681px;width:90.5px;height:2px;background:repeating-linear-gradient(90deg,#fb0000 0 7px,transparent 7px 14.800px);"></div>
<div class="" style="position:absolute;left:1003px;top:668px;width:179px;height:18px;background:#fff;border-top:1px solid #aca899"></div>
<div class="" style="position:absolute;left:1003px;top:669px;width:2px;height:17px;border-left:1px solid #c5c2b2;border-right:1px solid #fff;"></div>
<div class="" style="position:absolute;left:1091px;top:669px;width:2px;height:17px;border-left:1px solid #c5c2b2;border-right:1px solid #fff;"></div>
<div class="" style="position:absolute;left:1121px;top:669px;width:2px;height:17px;border-left:1px solid #c5c2b2;border-right:1px solid #fff;"></div>
<div class="" style="position:absolute;left:1151px;top:669px;width:2px;height:17px;border-left:1px solid #c5c2b2;border-right:1px solid #fff;"></div>
<div class="" style="position:absolute;left:1181px;top:669px;width:2px;height:17px;border-left:1px solid #c5c2b2;border-right:1px solid #fff;"></div>
<div class="" style="position:absolute;left:1209px;top:669px;width:2px;height:17px;border-left:1px solid #c5c2b2;border-right:1px solid #fff;"></div>
<div class="" style="position:absolute;left:1274px;top:669px;width:2px;height:17px;border-left:1px solid #c5c2b2;border-right:1px solid #fff;"></div>
<svg class="a" style="left:1010px;top:672px" width="11" height="11"><circle cx="5.500" cy="5.500" r="4.500" fill="#fff" stroke="#c000c0"/><path d="M3 5.500H8" stroke="#e00000"/></svg>
<div class="t s" style="left:1024px;top:670px;height:16px;line-height:16px;color:#000;font-size:12.500px">即时行情<span style="color:#0050c0">...</span></div>
<svg class="a" style="left:1099px;top:669px" width="18" height="17"><circle cx="9" cy="7" r="5.500" fill="#58c0d0" stroke="#205060"/><path d="M5 4C8 6,10 6,13 4M5 10C8 8,10 8,13 10M9 1.500V12.500" stroke="#205060" fill="none" stroke-width=".8"/><path d="M4 2L9 8" stroke="#2030c0" stroke-width="1.500"/><path d="M6 15H12M9 12.500V15" stroke="#404040"/></svg>
<svg class="a" style="left:1130px;top:670px" width="16" height="15"><path d="M8 1.500C5.500 1.500,5.500 8.500,2.500 11.500H13.500C10.500 8.500,10.500 1.500,8 1.500Z" fill="#c0c0c0" stroke="#303030"/><circle cx="8" cy="2" r="1.200" fill="#e0c020"/><path d="M7 12.500H9" stroke="#000" stroke-width="1.500"/></svg>
<svg class="a" style="left:1158px;top:671px" width="18" height="13"><path d="M1 5L9 1.500L17 6L9 11.500Z" fill="#e8c828" stroke="#504000"/><path d="M4 5.500L9 3.500L14 6L9 9Z" fill="#fff8c0" stroke="#a08000" stroke-width=".6"/></svg>
<svg class="a" style="left:1188px;top:669px" width="15" height="17"><path d="M2.500 3.500L11.500 1.500V13.500L2.500 15.500Z" fill="#c8c8c8" stroke="#404040"/><path d="M11.500 1.500L13.500 3V14L11.500 13.500" fill="#909090" stroke="#404040"/><path d="M4 6L10 5M4 9L10 8" stroke="#606060"/><rect x="6" y="10" width="2" height="2" fill="#404040"/></svg>
<div class="t s" style="left:1216.5px;top:670px;height:16px;line-height:16px;color:#000;font-size:12.500px">15:02:38</div>
<div class="" style="position:absolute;left:0px;top:687px;width:1280px;height:33px;background:linear-gradient(180deg,#3168d5 0,#4993e6 3%,#2663e0 10%,#245edc 50%,#2158d0 85%,#1941a5 100%);"></div>
<div class="" style="position:absolute;left:0px;top:690px;width:97px;height:30px;border-radius:0 12px 14px 0;background:linear-gradient(180deg,#2f7d2f 0,#5ab05a 7%,#3f973f 20%,#368c36 60%,#2e7e2e 100%);box-shadow:inset -2px 0 3px rgba(0,0,0,.3),1px 0 2px rgba(0,0,40,.5)"></div>
<svg class="a" style="left:9px;top:694px" width="22" height="20" viewBox="0 0 22 20"><path d="M2 3C5 1,7 2,10 3L9 9C6 8,4 7.500,1 9Z" fill="#e8502c"/><path d="M11 3.500C14 5,17 4,20 2.500L19 8.500C16 10,13 10.500,10 9.500Z" fill="#6cc04c"/><path d="M1 10.500C4 9,6 9.500,9 10.500L8 16.500C5 15.500,3 15,0 16.500Z" fill="#4a8ef0"/><path d="M10 11C13 12,16 11.500,19 10L18 16C15 17.500,12 18,9 17Z" fill="#f4c430"/></svg>
<div class="t" style="left:38px;top:693px;height:24px;line-height:24px;font-size:19px;font-style:italic;font-weight:500;color:#fff;text-shadow:1px 1px 1px #1a4a1a;font-family:'Liberation Sans','Noto Sans CJK SC',sans-serif">开始</div>
<div class="" style="position:absolute;left:107px;top:693px;width:3px;height:22px;background:repeating-linear-gradient(180deg,#1b3f9c 0 2px,transparent 2px 4px);"></div>
<div class="" style="position:absolute;left:108px;top:694px;width:2px;height:22px;background:repeating-linear-gradient(180deg,#5a8cf0 0 1px,transparent 1px 4px);opacity:.7"></div>
<div class="" style="position:absolute;left:211px;top:693px;width:3px;height:22px;background:repeating-linear-gradient(180deg,#1b3f9c 0 2px,transparent 2px 4px);"></div>
<div class="" style="position:absolute;left:212px;top:694px;width:2px;height:22px;background:repeating-linear-gradient(180deg,#5a8cf0 0 1px,transparent 1px 4px);opacity:.7"></div>
<svg class="a" style="left:118px;top:696px" width="18" height="18"><rect x="2" y="3" width="13" height="12" rx="2" fill="#e8f0ff" stroke="#2850a0"/><circle cx="8.500" cy="9" r="3.500" fill="#3070d0"/><path d="M11 4L15 1" stroke="#e06020" stroke-width="2"/></svg>
<svg class="a" style="left:141px;top:695px" width="20" height="20"><circle cx="10" cy="10" r="6.500" fill="none" stroke="#8cc8ff" stroke-width="3.500"/><path d="M4 10H16" stroke="#8cc8ff" stroke-width="2.500"/><path d="M2 15C5 6,14 1,19 3" stroke="#f0c020" stroke-width="1.800" fill="none"/></svg>
<svg class="a" style="left:165px;top:696px" width="18" height="18"><circle cx="9" cy="9" r="8" fill="#38b048" stroke="#e8ffe8"/><circle cx="9" cy="9" r="4" fill="none" stroke="#fff" stroke-width="2"/><path d="M5 9H13" stroke="#fff" stroke-width="1.500"/></svg>
<div class="t" style="left:194px;top:692px;height:14px;line-height:14px;font-size:13px;color:#cfe0ff">»</div>
<div class="" style="position:absolute;left:218.5px;top:694px;width:159px;height:24px;border-radius:3px;background:linear-gradient(180deg,#f0a040 0,#e8861c 15%,#e07a10 80%,#c86808 100%);box-shadow:inset 0 0 0 1px #b05c08;"></div>
<div class="" style="position:absolute;left:228px;top:697px;width:16px;height:16px;background:#fff;"><svg width="16" height="16"><path d="M2 4H7M2 8H14M3 12H13M9 4H14" stroke="#30a030" stroke-width="2"/></svg></div>
<div class="t s" style="left:248.5px;top:697px;height:16px;line-height:16px;color:#fff;font-size:12px">三人行等<span class="l">4</span>个会话</div>
<div class="" style="position:absolute;left:379px;top:694px;width:159px;height:24px;border-radius:3px;background:linear-gradient(180deg,#5c98f0 0,#3c80ee 12%,#3478e8 70%,#2c68d8 100%);box-shadow:inset 0 0 0 1px #1c4cb0;"></div>
<svg class="a" style="left:389px;top:698px" width="14" height="14"><circle cx="7" cy="7" r="6" fill="#3090e0" stroke="#e0e8f8"/><circle cx="7" cy="7" r="2.500" fill="#f0c020"/></svg>
<div class="t s" style="left:408.5px;top:697px;height:16px;line-height:16px;color:#fff;font-size:12px">国金太阳至强版<span class="l">V7...</span></div>
<div class="" style="position:absolute;left:539px;top:694px;width:159px;height:24px;border-radius:3px;background:linear-gradient(180deg,#153d98 0,#1e52b8 20%,#1c4eb0 100%);box-shadow:inset 0 0 0 1px #0f2d78;"></div>
<div class="" style="position:absolute;left:550px;top:698px;width:13px;height:13px;background:#fff;border:2px solid #f00"><svg width="9" height="9"><path d="M1 7L7 2M1 4L4 5" stroke="#e00" stroke-width="1.300"/></svg></div>
<div class="t s" style="left:568.5px;top:697px;height:16px;line-height:16px;color:#fff;font-size:12px">金字塔决策交易系<span class="l">...</span></div>
<div class="" style="position:absolute;left:699px;top:694px;width:158px;height:24px;border-radius:3px;background:linear-gradient(180deg,#5c98f0 0,#3c80ee 12%,#3478e8 70%,#2c68d8 100%);box-shadow:inset 0 0 0 1px #1c4cb0;"></div>
<svg class="a" style="left:709px;top:697px" width="15" height="15"><circle cx="7.500" cy="7.500" r="7" fill="#38b048" stroke="#e8ffe8"/><circle cx="7.500" cy="7.500" r="3.500" fill="none" stroke="#fff" stroke-width="1.800"/><path d="M4 7.500H11" stroke="#fff" stroke-width="1.300"/></svg>
<div class="t s" style="left:729px;top:697px;height:16px;line-height:16px;color:#fff;font-size:12px">图表程序化交易中<span class="l">...</span></div>
<div class="" style="position:absolute;left:1107px;top:693px;width:3px;height:22px;background:repeating-linear-gradient(180deg,#1b3f9c 0 2px,transparent 2px 4px);"></div>
<div class="" style="position:absolute;left:1139px;top:693px;width:3px;height:22px;background:repeating-linear-gradient(180deg,#1b3f9c 0 2px,transparent 2px 4px);"></div>
<svg class="a" style="left:1153px;top:696px" width="14" height="18"><rect x="2.500" y="4.500" width="9" height="12" rx="1" fill="#30a030" stroke="#e8ffe8"/><rect x="5" y="1" width="4" height="4" fill="#e0e0e0"/><path d="M7 7V13M5 9L7 7L9 9" stroke="#fff" fill="none"/></svg>
<div class="" style="position:absolute;left:1185px;top:687px;width:95px;height:33px;background:linear-gradient(180deg,#2a6ad8 0,#2f7fe4 6%,#18a8f0 12%,#139deb 25%,#1094e6 60%,#0f88de 90%,#0a62c8 100%);border-left:1px solid #0a3a80;box-shadow:inset 1px 0 0 #18b8f8"></div>
<svg class="a" style="left:1176px;top:696px" width="20" height="20"><circle cx="10" cy="10" r="8.500" fill="#2878e8" stroke="#b8d4f8" stroke-width="1.200"/><path d="M12 5.500L7.500 10L12 14.500" stroke="#fff" stroke-width="2.200" fill="none"/></svg>
<svg class="a" style="left:1197px;top:697px" width="16" height="16"><path d="M8 1A7 7 0 0 1 14 11L8 8Z" fill="#f0b020"/><path d="M14 11A7 7 0 0 1 2 11L8 8Z" fill="#40b040"/><path d="M2 11A7 7 0 0 1 8 1L8 8Z" fill="#e8e8e8"/></svg>
<div class="t s" style="left:1237.5px;top:697px;height:16px;line-height:16px;color:#fff;font-size:12px">15:02</div><div class="" style="position:absolute;left:476px;top:15px;width:442px;height:649px;background:#0054e3;border-radius:8px 8px 0 0;box-shadow:inset 1px 0 0 #0831d9,inset -1px 0 0 #00138c,inset 0 -1px 0 #00138c,inset 2px 0 0 #166aee,inset -2px 0 0 #0441d8,inset 0 -2px 0 #0441d8;"></div>
<div class="" style="position:absolute;left:476px;top:15px;width:442px;height:30px;border-radius:8px 8px 0 0;background:linear-gradient(180deg,#0058ee 0,#3a92ff 1.500px,#2585ff 3.500px,#0a6af5 6px,#0056e0 9px,#0055e2 14px,#005ff0 20px,#0068ff 25px,#0066fc 27px,#0046d8 28.500px,#0038c0 30px);box-shadow:inset 1px 0 0 #0831d9,inset -1px 0 0 #00138c"></div>
<div class="" style="position:absolute;left:480px;top:45px;width:434px;height:615px;background:#ece9d8;"></div>
<div class="" style="position:absolute;left:483px;top:23px;width:15px;height:13px;background:#fff;border-top:2px solid #e8eef8;box-shadow:0 0 0 1px #2a62c8;"><div style="position:absolute;right:0;top:-2px;width:3px;height:2px;background:#f88"></div></div>
<div class="t" style="left:502px;top:22px;height:18px;line-height:18px;font-size:13px;font-weight:bold;color:#fff;letter-spacing:0.920px;font-family:'Liberation Sans','Noto Sans CJK SC',sans-serif;text-shadow:1px 1px 0 #0a1883">图表程式化交易<span class="lb"> - </span>技术分析<span class="lb"> - </span>交易中</div>
<div class="" style="position:absolute;left:845px;top:21px;width:21px;height:21px;border:1px solid #fff;border-radius:3px;background:radial-gradient(circle at 25% 25%,#6e9bf5 0,#3a6fe8 40%,#2050d0 100%);"><svg width="19" height="19" viewBox="0 0 20 20" style="display:block"><rect x="5" y="13" width="7" height="3" fill="#fff"/></svg></div>
<div class="" style="position:absolute;left:868px;top:21px;width:21px;height:21px;border:1px solid #fff;border-radius:3px;background:radial-gradient(circle at 25% 25%,#6e9bf5 0,#3a6fe8 40%,#2050d0 100%);"><svg width="19" height="19" viewBox="0 0 20 20" style="display:block"><rect x="5.500" y="6" width="10" height="9" fill="none" stroke="#fff" stroke-width="1.500"/><rect x="5" y="5" width="11" height="3" fill="#fff"/></svg></div>
<div class="" style="position:absolute;left:891px;top:21px;width:21px;height:21px;border:1px solid #fff;border-radius:3px;background:radial-gradient(circle at 30% 30%,#f0a080 0,#e0562d 45%,#c13b18 100%);"><svg width="19" height="19" viewBox="0 0 20 20" style="display:block"><path d="M4.800 4.800 L15.200 15.200 M15.200 4.800 L4.800 15.200" stroke="#fff" stroke-width="2.400"/></svg></div>
<div class="t " style="left:491px;top:58.5px;height:14px;line-height:14px;">如果您需要指定信号的交易类型，请点击</div>
<div class="btn" style="left:711px;top:56px;width:174px;height:21px;line-height:18px;">交易信号执行选择</div>
<div class="t " style="left:491px;top:82.5px;height:14px;line-height:14px;">程式化交易运行模式</div>
<div class="gl" style="left:614px;top:88.5px;width:287px"></div>
<div class="rb" style="left:513px;top:101.5px"></div>
<div class="t " style="left:531.5px;top:101px;height:14px;line-height:14px;">固定时间间隔</div>
<div class="rb" style="left:635.5px;top:101.5px"><div style="position:absolute;left:3.500px;top:3.500px;width:4px;height:4px;border-radius:50%;background:#000"></div></div>
<div class="t " style="left:653px;top:101px;height:14px;line-height:14px;">走完一根<span class="l">K</span>线以后</div>
<div class="" style="position:absolute;left:651px;top:101px;width:93px;height:15px;border:1px dotted #000;"></div>
<div class="xpbtn" style="left:748px;top:100px;width:24px;height:15px;line-height:12px;line-height:11px"><span class="l">...</span></div>
<div class="t " style="left:779px;top:101px;height:14px;line-height:14px;color:#0000d0;text-decoration:underline">模式说明和建议</div>
<div class="t " style="left:524.5px;top:121.5px;height:14px;line-height:14px;">时间间隔<span class="l">(G):</span></div>
<div class="edit" style="position:absolute;left:603.5px;top:119.5px;width:45px;height:20px;"><span class="l" style="position:absolute;left:4px;top:3px;color:#aca899;line-height:12px">1</span></div>
<div class="t " style="left:654px;top:121.5px;height:14px;line-height:14px;">秒</div>
<div class="t " style="left:491px;top:142.5px;height:14px;line-height:14px;">运行选项</div>
<div class="gl" style="left:551px;top:148.5px;width:350px"></div>
<div class="cb" style="left:512px;top:162.5px"><svg width="11" height="11" viewBox="0 0 11 11" style="display:block"><path d="M2 4.500 L4.500 7 L9 2.500 V5 L4.500 9.500 L2 7Z" fill="#000"/></svg></div>
<div class="t " style="left:530px;top:162px;height:14px;line-height:14px;">锁定画面所有品种</div>
<div class="xpbtn" style="left:747px;top:159px;width:139px;height:19px;line-height:16px;color:#0000ff;line-height:16px;box-shadow:inset 0 0 0 1px #bcd4f6,inset 0 0 0 2px #89ade4">程式化交易下单设置</div>
<div class="cb" style="left:512px;top:182.5px"></div>
<div class="t " style="left:530px;top:182px;height:14px;line-height:14px;">高频<span class="l">(</span>秒或分笔周期请选择该选项<span class="l">)</span></div>
<div class="cb" style="left:713px;top:182.5px"><svg width="11" height="11" viewBox="0 0 11 11" style="display:block"><path d="M2 4.500 L4.500 7 L9 2.500 V5 L4.500 9.500 L2 7Z" fill="#000"/></svg></div>
<div class="t " style="left:731px;top:182px;height:14px;line-height:14px;">启动时检测是否对上根<span class="l">K</span>信号交易</div>
<div class="cb" style="left:491px;top:203.5px"></div>
<div class="t " style="left:509px;top:203px;height:14px;line-height:14px;">持仓同步检测</div>
<div class="gl" style="left:586px;top:209px;width:315px"></div>
<div class="rb dis" style="left:510.5px;top:221.5px"><div style="position:absolute;left:3.500px;top:3.500px;width:4px;height:4px;border-radius:50%;background:#aca899"></div></div>
<div class="t gray" style="left:528.5px;top:221px;height:14px;line-height:14px;">固定时间间隔</div>
<div class="rb dis" style="left:635px;top:221.5px"></div>
<div class="t gray" style="left:653px;top:221px;height:14px;line-height:14px;">走完一根<span class="l">K</span>线以后</div>
<div class="btn" style="left:758px;top:216px;width:75px;height:21px;line-height:18px;">手工同步</div>
<div class="t " style="left:512px;top:244px;height:14px;line-height:14px;">扫描时间间隔<span class="l">(G):</span></div>
<div class="edit" style="position:absolute;left:612px;top:242.5px;width:45px;height:20px;"><span class="l" style="position:absolute;left:4px;top:3px;color:#aca899;line-height:12px">12</span></div>
<div class="t " style="left:663px;top:244px;height:14px;line-height:14px;">秒</div>
<div class="cb dis" style="left:690px;top:244.5px"><svg width="11" height="11" viewBox="0 0 11 11" style="display:block"><path d="M2 4.500 L4.500 7 L9 2.500 V5 L4.500 9.500 L2 7Z" fill="#aca899"/></svg></div>
<div class="t gray" style="left:708.5px;top:244px;height:14px;line-height:14px;">出现持仓不同步后自动矫正持仓</div>
<div class="cb dis" style="left:690px;top:263.5px"><svg width="11" height="11" viewBox="0 0 11 11" style="display:block"><path d="M2 4.500 L4.500 7 L9 2.500 V5 L4.500 9.500 L2 7Z" fill="#aca899"/></svg></div>
<div class="t gray" style="left:708.5px;top:263px;height:14px;line-height:14px;">当前<span class="l">K</span>线出现信号后停止检测</div>
<div class="t " style="left:491px;top:274.5px;height:14px;line-height:14px;">下单品种映射</div>
<div class="gl" style="left:585px;top:280.5px;width:316px"></div>
<div class="cb dis" style="left:510px;top:295px"></div>
<div class="t gray" style="left:528px;top:293.5px;height:14px;line-height:14px;">启用自定义下单品种</div>
<div class="cb" style="left:722px;top:295px"></div>
<div class="t " style="left:740.5px;top:293.5px;height:14px;line-height:14px;">启用下单价格偏移</div>
<div class="t " style="left:500.5px;top:311px;height:14px;line-height:14px;">下面的是您当前图表程序化交易的交易记录：</div>
<div class="" style="position:absolute;left:491px;top:329px;width:413px;height:205px;border:2px solid;border-color:#9d9a8a #fff #fff #9d9a8a;background:#fff;overflow:hidden"></div>
<div class="" style="position:absolute;left:493px;top:331px;width:409px;height:16px;background:linear-gradient(180deg,#fff 0,#fff 1px,#efede0 1px,#ebe8d8 11px,#e0dccb 13px,#d2cebd 14px,#c8c4b3 16px);"></div>
<div class="" style="position:absolute;left:515px;top:333px;width:2px;height:12px;border-left:1px solid #c5c2b2;border-right:1px solid #fff;"></div>
<div class="" style="position:absolute;left:607px;top:333px;width:2px;height:12px;border-left:1px solid #c5c2b2;border-right:1px solid #fff;"></div>
<div class="" style="position:absolute;left:707px;top:333px;width:2px;height:12px;border-left:1px solid #c5c2b2;border-right:1px solid #fff;"></div>
<div class="" style="position:absolute;left:834px;top:333px;width:2px;height:12px;border-left:1px solid #c5c2b2;border-right:1px solid #fff;"></div>
<div class="" style="position:absolute;left:875px;top:333px;width:2px;height:12px;border-left:1px solid #c5c2b2;border-right:1px solid #fff;"></div>
<div class="t " style="left:498.5px;top:332px;height:14px;line-height:14px;">序<span class="l">.</span></div>
<div class="t " style="left:521px;top:332px;height:14px;line-height:14px;">品种名称</div>
<div class="t " style="left:613px;top:332px;height:14px;line-height:14px;">公式名称</div>
<div class="t " style="left:713px;top:332px;height:14px;line-height:14px;">下单时间</div>
<div class="t " style="left:839px;top:332px;height:14px;line-height:14px;">类型</div>
<div class="t " style="left:879.5px;top:332px;height:14px;line-height:14px;">交易</div>
<div style="position:absolute;left:492.500px;top:348px;width:410px;height:1px;background:#ece9d8"></div><div style="position:absolute;left:492.500px;top:361px;width:410px;height:1px;background:#ece9d8"></div><div style="position:absolute;left:492.500px;top:374px;width:410px;height:1px;background:#ece9d8"></div><div style="position:absolute;left:492.500px;top:387px;width:410px;height:1px;background:#ece9d8"></div><div style="position:absolute;left:492.500px;top:400px;width:410px;height:1px;background:#ece9d8"></div><div style="position:absolute;left:492.500px;top:413px;width:410px;height:1px;background:#ece9d8"></div><div style="position:absolute;left:492.500px;top:426px;width:410px;height:1px;background:#ece9d8"></div><div style="position:absolute;left:492.500px;top:439px;width:410px;height:1px;background:#ece9d8"></div><div style="position:absolute;left:492.500px;top:452px;width:410px;height:1px;background:#ece9d8"></div><div style="position:absolute;left:492.500px;top:465px;width:410px;height:1px;background:#ece9d8"></div><div style="position:absolute;left:492.500px;top:478px;width:410px;height:1px;background:#ece9d8"></div><div style="position:absolute;left:492.500px;top:491px;width:410px;height:1px;background:#ece9d8"></div><div style="position:absolute;left:492.500px;top:504px;width:410px;height:1px;background:#ece9d8"></div>
<div class="" style="position:absolute;left:515px;top:347.5px;width:1px;height:170px;background:#ece9d8;"></div>
<div class="" style="position:absolute;left:607px;top:347.5px;width:1px;height:170px;background:#ece9d8;"></div>
<div class="" style="position:absolute;left:707px;top:347.5px;width:1px;height:170px;background:#ece9d8;"></div>
<div class="" style="position:absolute;left:834px;top:347.5px;width:1px;height:170px;background:#ece9d8;"></div>
<div class="" style="position:absolute;left:875px;top:347.5px;width:1px;height:170px;background:#ece9d8;"></div>
<div class="t " style="left:497px;top:348px;height:14px;line-height:14px;"><span class="l">1</span></div>
<div class="t " style="left:521px;top:348px;height:14px;line-height:14px;"><span class="l">RM01 </span>菜粕<span class="l">1601</span></div>
<div class="t " style="left:613.5px;top:348px;height:14px;line-height:14px;">日内交易</div>
<div class="t " style="left:713px;top:348px;height:14px;line-height:14px;"><span class="l">15/10/26 10:38:58</span></div>
<div class="t " style="left:839px;top:348px;height:14px;line-height:14px;">平多</div>
<div class="t " style="left:881px;top:348px;height:14px;line-height:14px;"><span class="l">1</span></div>
<div class="t " style="left:497px;top:361px;height:14px;line-height:14px;"><span class="l">2</span></div>
<div class="t " style="left:521px;top:361px;height:14px;line-height:14px;"><span class="l">RM01 </span>菜粕<span class="l">1601</span></div>
<div class="t " style="left:613.5px;top:361px;height:14px;line-height:14px;">日内交易</div>
<div class="t " style="left:713px;top:361px;height:14px;line-height:14px;"><span class="l">15/10/26 10:38:58</span></div>
<div class="t " style="left:839px;top:361px;height:14px;line-height:14px;">开空</div>
<div class="t " style="left:881px;top:361px;height:14px;line-height:14px;"><span class="l">1</span></div>
<div class="t " style="left:497px;top:374px;height:14px;line-height:14px;"><span class="l">3</span></div>
<div class="t " style="left:521px;top:374px;height:14px;line-height:14px;"><span class="l">RM01 </span>菜粕<span class="l">1601</span></div>
<div class="t " style="left:613.5px;top:374px;height:14px;line-height:14px;">日内交易</div>
<div class="t " style="left:713px;top:374px;height:14px;line-height:14px;"><span class="l">15/10/26 10:48:56</span></div>
<div class="t " style="left:839px;top:374px;height:14px;line-height:14px;">平空</div>
<div class="t " style="left:881px;top:374px;height:14px;line-height:14px;"><span class="l">1</span></div>
<div class="t " style="left:497px;top:387px;height:14px;line-height:14px;"><span class="l">4</span></div>
<div class="t " style="left:521px;top:387px;height:14px;line-height:14px;"><span class="l">RM01 </span>菜粕<span class="l">1601</span></div>
<div class="t " style="left:613.5px;top:387px;height:14px;line-height:14px;">日内交易</div>
<div class="t " style="left:713px;top:387px;height:14px;line-height:14px;"><span class="l">15/10/26 11:18:57</span></div>
<div class="t " style="left:839px;top:387px;height:14px;line-height:14px;">开多</div>
<div class="t " style="left:881px;top:387px;height:14px;line-height:14px;"><span class="l">1</span></div>
<div class="t " style="left:497px;top:400px;height:14px;line-height:14px;"><span class="l">5</span></div>
<div class="t " style="left:521px;top:400px;height:14px;line-height:14px;"><span class="l">RM01 </span>菜粕<span class="l">1601</span></div>
<div class="t " style="left:613.5px;top:400px;height:14px;line-height:14px;">日内交易</div>
<div class="t " style="left:713px;top:400px;height:14px;line-height:14px;"><span class="l">15/10/26 13:30:58</span></div>
<div class="t " style="left:839px;top:400px;height:14px;line-height:14px;">开多</div>
<div class="t " style="left:881px;top:400px;height:14px;line-height:14px;"><span class="l">1</span></div>
<div class="t " style="left:497px;top:413px;height:14px;line-height:14px;"><span class="l">6</span></div>
<div class="t " style="left:521px;top:413px;height:14px;line-height:14px;"><span class="l">RM01 </span>菜粕<span class="l">1601</span></div>
<div class="t " style="left:613.5px;top:413px;height:14px;line-height:14px;">日内交易</div>
<div class="t " style="left:713px;top:413px;height:14px;line-height:14px;"><span class="l">15/10/26 13:49:58</span></div>
<div class="t " style="left:839px;top:413px;height:14px;line-height:14px;">平多</div>
<div class="t " style="left:881px;top:413px;height:14px;line-height:14px;"><span class="l">3</span></div>
<div class="t " style="left:497px;top:426px;height:14px;line-height:14px;"><span class="l">7</span></div>
<div class="t " style="left:521px;top:426px;height:14px;line-height:14px;"><span class="l">RM01 </span>菜粕<span class="l">1601</span></div>
<div class="t " style="left:613.5px;top:426px;height:14px;line-height:14px;">日内交易</div>
<div class="t " style="left:713px;top:426px;height:14px;line-height:14px;"><span class="l">15/10/26 13:49:58</span></div>
<div class="t " style="left:839px;top:426px;height:14px;line-height:14px;">开空</div>
<div class="t " style="left:881px;top:426px;height:14px;line-height:14px;"><span class="l">1</span></div>
<div class="t " style="left:497px;top:439px;height:14px;line-height:14px;"><span class="l">8</span></div>
<div class="t " style="left:521px;top:439px;height:14px;line-height:14px;"><span class="l">RM01 </span>菜粕<span class="l">1601</span></div>
<div class="t " style="left:613.5px;top:439px;height:14px;line-height:14px;">日内交易</div>
<div class="t " style="left:713px;top:439px;height:14px;line-height:14px;"><span class="l">15/10/26 14:08:01</span></div>
<div class="t " style="left:839px;top:439px;height:14px;line-height:14px;">开空</div>
<div class="t " style="left:881px;top:439px;height:14px;line-height:14px;"><span class="l">1</span></div>
<div class="t " style="left:497px;top:452px;height:14px;line-height:14px;"><span class="l">9</span></div>
<div class="t " style="left:521px;top:452px;height:14px;line-height:14px;"><span class="l">RM01 </span>菜粕<span class="l">1601</span></div>
<div class="t " style="left:613.5px;top:452px;height:14px;line-height:14px;">日内交易</div>
<div class="t " style="left:713px;top:452px;height:14px;line-height:14px;"><span class="l">15/10/26 14:54:58</span></div>
<div class="t " style="left:839px;top:452px;height:14px;line-height:14px;">开多</div>
<div class="t " style="left:881px;top:452px;height:14px;line-height:14px;"><span class="l">1</span></div>
<div class="t " style="left:497px;top:465px;height:14px;line-height:14px;"><span class="l">10</span></div>
<div class="t " style="left:521px;top:465px;height:14px;line-height:14px;"><span class="l">RM01 </span>菜粕<span class="l">1601</span></div>
<div class="t " style="left:613.5px;top:465px;height:14px;line-height:14px;">日内交易</div>
<div class="t " style="left:713px;top:465px;height:14px;line-height:14px;"><span class="l">15/10/26 14:56:58</span></div>
<div class="t " style="left:839px;top:465px;height:14px;line-height:14px;">开多</div>
<div class="t " style="left:881px;top:465px;height:14px;line-height:14px;"><span class="l">1</span></div>
<div class="" style="position:absolute;left:493px;top:516px;width:409px;height:16px;background:#f4f3ee;"></div>
<div class="" style="position:absolute;left:493px;top:516.5px;width:16px;height:15px;border:1px solid #fff;border-radius:2px;background:linear-gradient(135deg,#c9d8fc,#b6c9f7);"><svg width="14" height="14" viewBox="0 0 14 14" style="display:block"><path d="M8.500 3.500 L5 7 L8.500 10.500" stroke="#4d6185" stroke-width="2" fill="none"/></svg></div>
<div class="" style="position:absolute;left:886px;top:516.5px;width:16px;height:15px;border:1px solid #fff;border-radius:2px;background:linear-gradient(135deg,#c9d8fc,#b6c9f7);"><svg width="14" height="14" viewBox="0 0 14 14" style="display:block"><path d="M5.500 3.500 L9 7 L5.500 10.500" stroke="#4d6185" stroke-width="2" fill="none"/></svg></div>
<div class="" style="position:absolute;left:510px;top:516.5px;width:247px;height:15px;border:1px solid #fff;border-radius:2px;background:linear-gradient(180deg,#c8d6fb,#bccbf8 60%,#b0c2f4);box-shadow:inset -1px -1px 0 #98b1e4"><div style="position:absolute;left:118px;top:4px;width:8px;height:7px;background:repeating-linear-gradient(90deg,#eef4fe 0 1px,#8cb0f8 1px 2px)"></div></div>
<svg class="a" style="left:480px;top:330px" width="434" height="160" viewBox="480 330 434 160"><ellipse cx="862.500" cy="398.500" rx="32.500" ry="13.500" stroke="#f00" fill="none"/><ellipse cx="857.500" cy="436" rx="39" ry="12" stroke="#f00" fill="none"/><ellipse cx="857.500" cy="463.500" rx="38" ry="14.500" stroke="#f00" fill="none"/></svg>
<div class="btn" style="left:491px;top:544.5px;width:75px;height:21px;line-height:18px;">清空记录</div>
<div class="cb" style="left:572px;top:549.5px"></div>
<div class="t " style="left:590px;top:549px;height:14px;line-height:14px;">启用多帐户及策略系数配置</div>
<div class="btn" style="left:739.5px;top:544.5px;width:46px;height:21px;line-height:18px;color:#aca899;text-shadow:1px 1px 0 #fff">设置</div>
<div class="" style="position:absolute;left:796px;top:539.5px;width:108px;height:57px;border:1px solid #000;"><div class="btn" style="left:0;top:0;width:106px;height:55px;line-height:52px">停止交易</div></div>
<div class="gl" style="left:491px;top:602px;width:410px"></div>
<div class="t " style="left:502px;top:609px;height:14px;line-height:14px;color:#000080;text-decoration:underline">如何使用图表程式化交易</div>
<div class="t " style="left:491px;top:628.5px;height:12px;line-height:12px;color:#f00">提醒<span class="l">:</span>新手建议在上述<span class="ql">“</span>程式化交易下单设置<span class="qr">”</span>中勾选<span class="ql">“</span>记录</div>
<div class="t " style="left:491px;top:640.5px;height:12px;line-height:12px;color:#f00">下单日志<span class="qr">”</span>选项，便于出现下单问题时查找原因。</div><div class="" style="position:absolute;left:160px;top:655px;width:160px;height:31px;border-radius:8px;background:linear-gradient(180deg,#0058ee 0,#3a92ff 1.500px,#2585ff 3.500px,#0a6af5 6px,#0056e0 9px,#0055e2 14px,#005ff0 20px,#0068ff 25px,#0066fc 27px,#0050e0 29px,#0038c0 31px);box-shadow:inset 1px 0 0 #0831d9,inset -1px 0 0 #00138c,inset 0 -1px 0 #00138c"></div>
<svg class="a" style="left:165px;top:662px" width="18" height="18" viewBox="0 0 18 18"><path d="M5.500 1.500H12L15.500 5V16.500H5.500Z" fill="#fff" stroke="#000"/><path d="M12 1.500V5H15.500" fill="none" stroke="#000"/><rect x="1" y="4" width="8" height="8" fill="#fff" stroke="#f00" stroke-width="1.500"/><path d="M2.500 10L7.500 5.500" stroke="#e00" stroke-width="1.200"/><path d="M8 9H12L9 13H13" stroke="#000" fill="none"/></svg>
<div class="t" style="left:184px;top:661px;height:20px;line-height:20px;font-size:13px;font-weight:bold;color:#fff;letter-spacing:1px;font-family:'Liberation Sans','Noto Sans CJK SC',sans-serif;text-shadow:1px 1px 0 #0a1883">交易<span class="lb" style="letter-spacing:0">...</span></div>
<div class="" style="position:absolute;left:248px;top:660px;width:21px;height:21px;border:1px solid #fff;border-radius:3px;background:radial-gradient(circle at 25% 25%,#6e9bf5 0,#3a6fe8 40%,#2050d0 100%);"><svg width="19" height="19" viewBox="0 0 20 20" style="display:block"><rect x="8" y="5.500" width="7" height="6" fill="none" stroke="#fff" stroke-width="1.500"/><rect x="5" y="9" width="7" height="6" fill="#3a6fe8" stroke="#fff" stroke-width="1.500"/></svg></div>
<div class="" style="position:absolute;left:271px;top:660px;width:21px;height:21px;border:1px solid #fff;border-radius:3px;background:radial-gradient(circle at 25% 25%,#6e9bf5 0,#3a6fe8 40%,#2050d0 100%);"><svg width="19" height="19" viewBox="0 0 20 20" style="display:block"><rect x="5.500" y="6" width="10" height="9" fill="none" stroke="#fff" stroke-width="1.500"/><rect x="5" y="5" width="11" height="3" fill="#fff"/></svg></div>
<div class="" style="position:absolute;left:294px;top:660px;width:21px;height:21px;border:1px solid #fff;border-radius:3px;background:radial-gradient(circle at 30% 30%,#f0a080 0,#e0562d 45%,#c13b18 100%);"><svg width="19" height="19" viewBox="0 0 20 20" style="display:block"><path d="M4.800 4.800 L15.200 15.200 M15.200 4.800 L4.800 15.200" stroke="#fff" stroke-width="2.400"/></svg></div>
</body></html>
